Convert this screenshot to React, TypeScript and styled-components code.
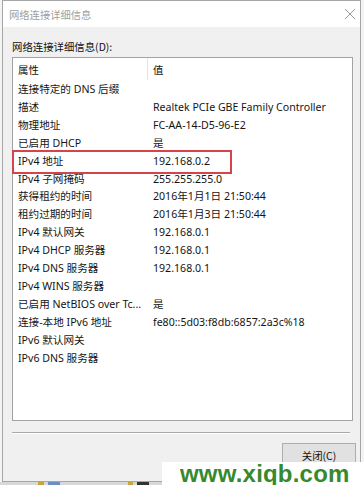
import React from "react";
import styled, { createGlobalStyle } from "styled-components";

const GlobalStyle = createGlobalStyle`
  html, body { margin: 0; padding: 0; background: #f4f4f4; }
  * { box-sizing: border-box; }
`;

const FONT = `"Noto Sans", "Noto Sans CJK SC", sans-serif`;

const Screen = styled.div`
  position: relative;
  width: 364px;
  height: 485px;
  overflow: hidden;
  background: #f4f4f4;
  font-family: ${FONT};
  display: flex;
  flex-direction: column;
`;

const Window = styled.div`
  margin-left: 2px;
  width: 359px;
  height: 482px;
  border: 1px solid #a6a6a6;
  display: flex;
  flex-direction: column;
  background: #f0f0f0;
`;

const TitleBar = styled.div`
  height: 26px;
  background: #ffffff;
  display: flex;
  align-items: center;
  justify-content: space-between;
  padding: 0 4px 0 6px;
  color: #a0a0a0;
  font-size: 10.3px;
  font-family: "Noto Sans CJK SC", sans-serif;
`;

const Body = styled.div`
  flex: 1;
  display: flex;
  flex-direction: column;
  padding: 13px 0 0 9px;
`;

const Label = styled.div`
  height: 14px;
  line-height: 14px;
  font-size: 10.4px;
  color: #111;
  font-family: "Noto Sans CJK SC", sans-serif;
`;

const ListBox = styled.div`
  margin-top: 3px;
  width: 341px;
  height: 364px;
  border: 1px solid #a3a3a3;
  background: #ffffff;
  display: flex;
  flex-direction: column;
`;

const HeaderRow = styled.div`
  height: 22px;
  display: grid;
  grid-template-columns: 135px 1fr;
  align-items: stretch;
  font-size: 10.4px;
  color: #111;
`;

const HeaderCell = styled.div<{ $sep?: boolean }>`
  display: flex;
  align-items: center;
  padding-left: 5px;
  padding-top: 1px;
  border-right: ${(p) => (p.$sep ? "1px solid #e3e3e3" : "none")};
  font-family: "Noto Sans CJK SC", sans-serif;
`;

const Row = styled.div<{ $mark?: boolean }>`
  position: relative;
  height: 17.93px;
  display: grid;
  grid-template-columns: 135px 1fr;
  align-items: center;
  font-size: 10.6px;
  color: #151515;
  white-space: nowrap;

  &::after {
    content: "";
    display: ${(p) => (p.$mark ? "block" : "none")};
    position: absolute;
    left: -1px;
    top: -1.5px;
    width: 216px;
    height: 20px;
    border: 2px solid #d4444a;
    pointer-events: none;
  }
`;

const Cell = styled.div`
  padding-left: 5px;
  overflow: hidden;
  line-height: 14px;
`;

const Separator = styled.div`
  margin-top: 11px;
  width: 338px;
  height: 2px;
  border-top: 1px solid #a9a9a9;
  border-bottom: 1px solid #ffffff;
`;

const ButtonRow = styled.div`
  margin-top: 9px;
  display: flex;
  justify-content: flex-end;
  padding-right: 4px;
`;

const Button = styled.div`
  width: 74px;
  height: 24px;
  background: #e1e1e1;
  border: 1px solid #adadad;
  display: flex;
  align-items: flex-start;
  justify-content: center;
  padding-top: 5px;
  font-size: 10.4px;
  line-height: 13px;
  color: #111;
  font-family: "Noto Sans CJK SC", sans-serif;
`;

const Strip = styled.div`
  height: 3px;
  display: flex;
  gap: 4px;
  padding-left: 38px;
  background: #d8d8d8;
`;

const StripIcon = styled.span<{ $c: string; $w: number }>`
  width: ${(p) => p.$w}px;
  height: 3px;
  background: ${(p) => p.$c};
`;

const Watermark = styled.div`
  position: absolute;
  left: 162px;
  top: 462px;
  width: 202px;
  height: 23px;
  background: #ffffff;
  display: flex;
  align-items: flex-end;
  padding-left: 18px;
  color: #37892d;
  font-family: "Liberation Sans", Arial, sans-serif;
  font-weight: bold;
  font-size: 24px;
  line-height: 23px;
  letter-spacing: 0.2px;
`;

const rows: [string, string][] = [
  ["连接特定的 DNS 后缀", ""],
  ["描述", "Realtek PCIe GBE Family Controller"],
  ["物理地址", "FC-AA-14-D5-96-E2"],
  ["已启用 DHCP", "是"],
  ["IPv4 地址", "192.168.0.2"],
  ["IPv4 子网掩码", "255.255.255.0"],
  ["获得租约的时间", "2016年1月1日 21:50:44"],
  ["租约过期的时间", "2016年1月3日 21:50:44"],
  ["IPv4 默认网关", "192.168.0.1"],
  ["IPv4 DHCP 服务器", "192.168.0.1"],
  ["IPv4 DNS 服务器", "192.168.0.1"],
  ["IPv4 WINS 服务器", ""],
  ["已启用 NetBIOS over Tc...", "是"],
  ["连接-本地 IPv6 地址", "fe80::5d03:f8db:6857:2a3c%18"],
  ["IPv6 默认网关", ""],
  ["IPv6 DNS 服务器", ""],
];

export default function App() {
  return (
    <>
      <GlobalStyle />
      <Screen>
        <Window>
          <TitleBar>
            <span>网络连接详细信息</span>
            <svg width="12" height="12" viewBox="0 0 12 12">
              <path d="M1 1 L11 11 M11 1 L1 11" stroke="#9a9a9a" strokeWidth="1" fill="none" />
            </svg>
          </TitleBar>
          <Body>
            <Label>网络连接详细信息(D):</Label>
            <ListBox>
              <HeaderRow>
                <HeaderCell $sep>属性</HeaderCell>
                <HeaderCell>值</HeaderCell>
              </HeaderRow>
              {rows.map(([k, v], i) => (
                <Row key={i} $mark={k === "IPv4 地址"}>
                  <Cell>{k}</Cell>
                  <Cell>{v}</Cell>
                </Row>
              ))}
            </ListBox>
            <Separator />
            <ButtonRow>
              <Button>关闭(C)</Button>
            </ButtonRow>
          </Body>
        </Window>
        <Strip>
          <StripIcon $c="#c9a53a" $w={6} />
          <StripIcon $c="#6b8fc0" $w={12} />
          <StripIcon $c="#d8d8d8" $w={60} />
          <StripIcon $c="#c9a53a" $w={5} />
          <StripIcon $c="#333" $w={12} />
        </Strip>
        <Watermark>www.xiqb.com</Watermark>
      </Screen>
    </>
  );
}
